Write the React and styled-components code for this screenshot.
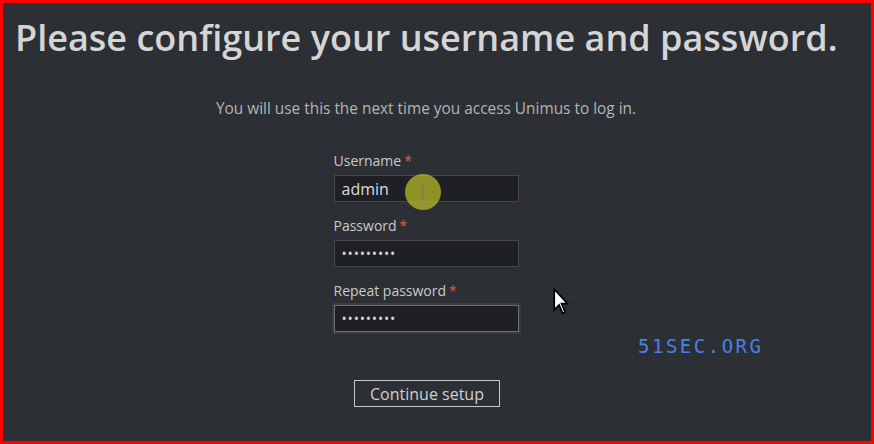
import React from "react";
import styled, { createGlobalStyle } from "styled-components";

const GlobalStyle = createGlobalStyle`
  html, body {
    margin: 0;
    padding: 0;
    background: #2c2f33;
  }
  * {
    box-sizing: border-box;
  }
`;

const Frame = styled.div`
  position: relative;
  width: 874px;
  height: 444px;
  border: 3px solid #ff0000;
  background-color: #2c2f33;
  font-family: "Open Sans", "Noto Sans", sans-serif;
  overflow: hidden;
`;

const Title = styled.h1`
  margin: 12px 0 0 12px;
  font-size: 36px;
  line-height: 46px;
  font-weight: 600;
  color: #d4d5d6;
  white-space: nowrap;
`;

const Content = styled.div`
  display: flex;
  flex-direction: column;
  align-items: center;
  padding-right: 22px;
`;

const Subtitle = styled.p`
  margin: 38px 0 0 0;
  font-size: 15.4px;
  line-height: 20px;
  font-weight: 400;
  color: #b4b5b6;
`;

const Form = styled.div`
  display: flex;
  flex-direction: column;
  width: 185px;
  margin-top: 32px;
`;

const Field = styled.div`
  display: flex;
  flex-direction: column;
  margin-bottom: 14px;
`;

const Label = styled.label`
  font-size: 14px;
  line-height: 19px;
  color: #c9cacb;
  margin-bottom: 5px;
`;

const Required = styled.span`
  color: #e05a44;
  margin-left: 3px;
`;

const Input = styled.div`
  height: 27px;
  padding: 0 7px;
  display: flex;
  align-items: center;
  background-color: #1f2023;
  border: 1px solid ${(p) => (p.focused ? "#6d6f72" : "#45474b")};
  box-shadow: ${(p) => (p.focused ? "0 0 0 2px #3a3c40" : "none")};
  color: #dcdddd;
  font-size: 16px;
`;

const Dots = styled.span`
  font-size: 14px;
  letter-spacing: 0.8px;
  color: #d0d1d2;
`;

const Button = styled.button`
  margin-top: 34px;
  margin-left: 2px;
  width: 146px;
  height: 27px;
  padding: 0;
  background: transparent;
  border: 1px solid #c7c8c9;
  color: #cfd0d1;
  font-family: "Open Sans", "Noto Sans", sans-serif;
  font-size: 16px;
  line-height: 24px;
`;

const Highlight = styled.div`
  position: absolute;
  left: 402px;
  top: 171px;
  width: 36px;
  height: 36px;
  border-radius: 50%;
  background: rgba(190, 190, 40, 0.72);
  display: flex;
  align-items: center;
  justify-content: center;
`;

const Pointer = styled.svg`
  position: absolute;
  left: 550px;
  top: 285px;
`;

const Watermark = styled.div`
  position: absolute;
  left: 635px;
  top: 333px;
  font-family: "DejaVu Sans Mono", "Liberation Mono", monospace;
  font-size: 19px;
  line-height: 20px;
  letter-spacing: 2.5px;
  color: #4a80e8;
`;

function PasswordDots() {
  return <Dots>•••••••••</Dots>;
}

export default function App() {
  return (
    <>
      <GlobalStyle />
      <Frame>
        <Title>Please configure your username and password.</Title>
        <Content>
          <Subtitle>
            You will use this the next time you access Unimus to log in.
          </Subtitle>
          <Form>
            <Field>
              <Label>
                Username<Required>*</Required>
              </Label>
              <Input>admin</Input>
            </Field>
            <Field>
              <Label>
                Password<Required>*</Required>
              </Label>
              <Input>
                <PasswordDots />
              </Input>
            </Field>
            <Field>
              <Label>
                Repeat password<Required>*</Required>
              </Label>
              <Input focused>
                <PasswordDots />
              </Input>
            </Field>
          </Form>
          <Button>Continue setup</Button>
        </Content>
        <Highlight>
          <svg width="8" height="16" viewBox="0 0 8 16">
            <path d="M1 1h6M4 1v14M1 15h6" stroke="#7a7a55" strokeWidth="1.2" fill="none" />
          </svg>
        </Highlight>
        <Pointer width="17" height="29" viewBox="0 0 14 24">
          <path
            d="M1 1 L1 18 L5 14 L8 21 L10 20 L7 13 L12 13 Z"
            fill="#ffffff"
            stroke="#000000"
            strokeWidth="1.4"
            strokeLinejoin="miter"
          />
        </Pointer>
        <Watermark>51SEC.ORG</Watermark>
      </Frame>
    </>
  );
}
